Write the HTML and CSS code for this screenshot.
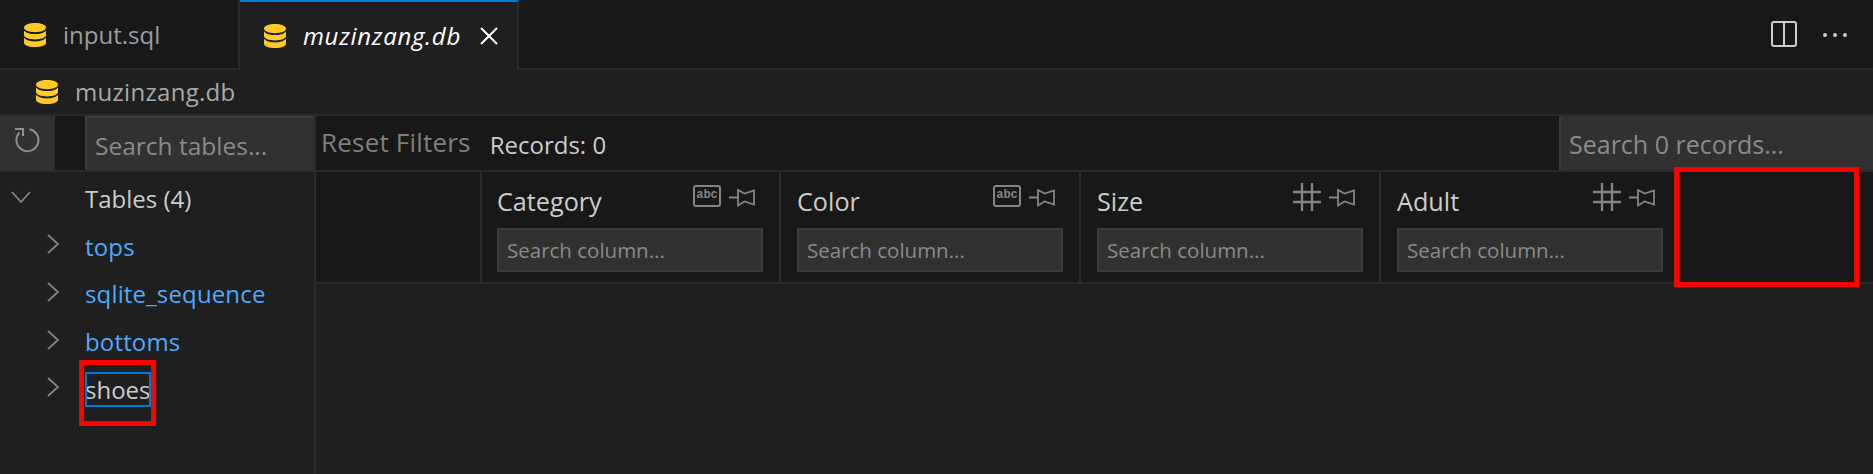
FILE: index.html
```html
<!DOCTYPE html>
<html lang="en">
<head>
<meta charset="utf-8">
<title>muzinzang.db</title>
<link rel="stylesheet" href="styles.css">
</head>
<body>
<svg class="defs" aria-hidden="true">
  <defs>
    <symbol id="db" viewBox="0 0 22 24">
      <path fill="#ffca28" d="M11 0C5 0 0 1.800 0 4.600S5 9.200 11 9.200 22 7.400 22 4.600 17 0 11 0Z"/>
      <path fill="#ffca28" d="M0 7.400V12c0 2.600 5 4.400 11 4.400S22 14.600 22 12V7.400c-1.800 2.500-6.200 3.600-11 3.600S1.800 9.900 0 7.400Z"/>
      <path fill="#ffca28" d="M0 14.800V19.400C0 22.200 5 24 11 24s11-1.800 11-4.600v-4.600c-1.800 2.500-6.200 3.600-11 3.600S1.800 17.300 0 14.800Z"/>
    </symbol>
    <symbol id="pin" viewBox="0 0 26 18">
      <path fill="none" stroke="currentColor" stroke-width="1.800" d="M0 8.500h9M9 1v15.500l6.500-4 9.500 3V1.500l-9.500 3L9 1Z"/>
    </symbol>
    <symbol id="hash" viewBox="0 0 28 28">
      <path fill="none" stroke="currentColor" stroke-width="2.400" d="M9 0v28M19 0v28M0 9h28M0 19h28"/>
    </symbol>
    <symbol id="abc" viewBox="0 0 28 22">
      <rect x="1" y="1" width="26" height="20" rx="2" fill="none" stroke="currentColor" stroke-width="2"/>
    </symbol>
    <symbol id="chev-r" viewBox="0 0 12 20">
      <path fill="none" stroke="currentColor" stroke-width="1.800" d="M1 1l10 9-10 9"/>
    </symbol>
  </defs>
</svg>

<div class="tabs">
  <div class="tab">
    <svg class="db-icon"><use href="#db"/></svg>
    <span class="tab-name">input.sql</span>
  </div>
  <div class="tab tab-active">
    <svg class="db-icon"><use href="#db"/></svg>
    <span class="tab-name">muzinzang.db</span>
    <svg class="tab-close" viewBox="0 0 18 18"><path fill="none" stroke="#fff" stroke-width="2" d="M1 1l16 16M17 1L1 17"/></svg>
  </div>
  <div class="tab-actions">
    <svg class="split-icon" viewBox="0 0 26 26"><rect x="1" y="1" width="24" height="24" rx="2" fill="none" stroke="#cccccc" stroke-width="2"/><path stroke="#cccccc" stroke-width="2" d="M13 1v24"/></svg>
    <svg class="more-icon" viewBox="0 0 24 4"><circle cx="2" cy="2" r="2" fill="#cccccc"/><circle cx="12" cy="2" r="2" fill="#cccccc"/><circle cx="22" cy="2" r="2" fill="#cccccc"/></svg>
  </div>
</div>

<div class="crumbs">
  <svg class="db-icon"><use href="#db"/></svg>
  <span class="crumb-name">muzinzang.db</span>
</div>

<div class="main">
  <aside class="side">
    <div class="side-tools">
      <div class="refresh">
        <svg class="refresh-icon" viewBox="0 0 24 24"><path fill="none" stroke="#8f8f8f" stroke-width="2" d="M4.500 4.500A11 11 0 1 0 14.500 1.300M0 1h8v7"/></svg>
      </div>
      <div class="side-gap"></div>
      <input class="search search-tables" placeholder="Search tables...">
    </div>
    <div class="tree">
      <div class="tree-row tree-head">
        <svg class="chev-down" viewBox="0 0 20 12"><path fill="none" stroke="#858585" stroke-width="1.800" d="M1 1l9 10 9-10"/></svg>
        <span>Tables (4)</span>
      </div>
      <div class="tree-row"><svg class="chev"><use href="#chev-r"/></svg><span class="link">tops</span></div>
      <div class="tree-row"><svg class="chev"><use href="#chev-r"/></svg><span class="link">sqlite_sequence</span></div>
      <div class="tree-row"><svg class="chev"><use href="#chev-r"/></svg><span class="link">bottoms</span></div>
      <div class="tree-row"><svg class="chev"><use href="#chev-r"/></svg><span class="focused">shoes</span></div>
    </div>
  </aside>
  <section class="grid">
    <div class="grid-tools">
      <span class="reset">Reset Filters</span>
      <span class="records">Records: 0</span>
      <input class="search search-records" placeholder="Search 0 records...">
    </div>
    <div class="head">
      <div class="head-index"></div>
      <div class="col col-first">
        <div class="col-top"><span class="col-name">Category</span><span class="col-icons"><span class="abc"><svg class="abc-box"><use href="#abc"/></svg><span class="abc-text">abc</span></span><svg class="pin"><use href="#pin"/></svg></span></div>
        <input class="col-search" placeholder="Search column...">
      </div>
      <div class="col">
        <div class="col-top"><span class="col-name">Color</span><span class="col-icons"><span class="abc"><svg class="abc-box"><use href="#abc"/></svg><span class="abc-text">abc</span></span><svg class="pin"><use href="#pin"/></svg></span></div>
        <input class="col-search" placeholder="Search column...">
      </div>
      <div class="col">
        <div class="col-top"><span class="col-name">Size</span><span class="col-icons"><svg class="hash"><use href="#hash"/></svg><svg class="pin"><use href="#pin"/></svg></span></div>
        <input class="col-search" placeholder="Search column...">
      </div>
      <div class="col col-last">
        <div class="col-top"><span class="col-name">Adult</span><span class="col-icons"><svg class="hash"><use href="#hash"/></svg><svg class="pin"><use href="#pin"/></svg></span></div>
        <input class="col-search" placeholder="Search column...">
      </div>
    </div>
  </section>
</div>

<div class="mark mark-shoes"></div>
<div class="mark mark-column"></div>
</body>
</html>
```
FILE: styles.css
```css
* { box-sizing: border-box; }
html, body { margin: 0; height: 100%; }
body {
  background: #1f1f1f;
  color: #cccccc;
  font-family: "Open Sans", "Noto Sans", sans-serif;
  font-size: 24px;
  overflow: hidden;
  position: relative;
}
.defs { position: absolute; width: 0; height: 0; }
.tabs {
  display: flex;
  height: 70px;
  background: #181818;
  border-bottom: 2px solid #2b2b2b;
}
.tab {
  display: flex;
  align-items: center;
  width: 240px;
  padding: 0 0 0 24px;
  border-right: 2px solid #2b2b2b;
  margin-bottom: -2px;
  color: #9d9d9d;
}
.tab-active {
  width: 279px;
  background: #1f1f1f;
  border-top: 2px solid #0078d4;
  color: #ffffff;
  font-style: italic;
  padding-left: 24px;
  letter-spacing: 0.7px;
}
.db-icon { width: 22px; height: 24px; flex: none; }
.tab-name { margin-left: 17px; margin-top: -2px; }
.tab-close { width: 18px; height: 18px; margin-left: 19px; }
.tab-actions {
  margin-left: auto;
  display: flex;
  align-items: center;
  gap: 26px;
  padding-right: 26px;
}
.split-icon { width: 26px; height: 26px; }
.more-icon { width: 24px; height: 4px; margin-top: 2px; }
.crumbs {
  display: flex;
  align-items: center;
  height: 46px;
  padding-left: 36px;
  border-bottom: 2px solid #2b2b2b;
  color: #a9a9a9;
  letter-spacing: 0.3px;
}
.crumb-name { margin-left: 17px; margin-top: -2px; }
.main { display: flex; height: 358px; }
.side {
  width: 316px;
  flex: none;
  border-right: 2px solid #2b2b2b;
}
.side-tools { display: flex; height: 56px; border-bottom: 2px solid #2b2b2b; }
.refresh {
  width: 55px;
  background: #313131;
  display: flex;
  justify-content: center;
  padding: 12px 1px 0 0;
}
.refresh-icon { width: 24px; height: 24px; overflow: visible; }
.side-gap { width: 30px; background: #181818; }
.search {
  font: inherit;
  background: #313131;
  border: 2px solid #3c3c3c;
  color: #cccccc;
  outline: none;
  border-radius: 0;
}
.search::placeholder, .col-search::placeholder { color: #8a8a8a; opacity: 1; }
.search-tables { width: 229px; font-size: 24.500px; padding: 2px 0 0 8px; border-bottom: 0; border-right: 0; }
.tree { padding-top: 4px; }
.tree-row {
  display: flex;
  align-items: center;
  height: 47.600px;
  padding-left: 47px;
}
.tree-row > span { margin-left: 26px; margin-top: -2px; }
.tree-head { padding-left: 10px; }
.tree-row.tree-head > span { margin-left: 54px; }
.chev-down { width: 20px; height: 12px; margin-top: -6px; margin-left: 1px; }
.chev { width: 12px; height: 20px; color: #858585; margin-top: -6px; }
.link { color: #4daafc; letter-spacing: 0.15px; }
.focused { outline: 2px solid #0078d4; outline-offset: -2px; line-height: 35px; height: 35px; width: 66px; white-space: nowrap; }
.grid { flex: 1; display: flex; flex-direction: column; min-width: 0; }
.grid-tools {
  display: flex;
  align-items: center;
  height: 56px;
  background: #181818;
  border-bottom: 2px solid #2b2b2b;
}
.reset { font-size: 26px; letter-spacing: 0.2px; color: #7f7f7f; margin-left: 5px; margin-top: -3px; }
.records { margin-left: 19px; margin-top: 3px; }
.search-records {
  font-size: 25px;
  margin-left: auto;
  width: 314px;
  height: 54px;
  padding: 2px 0 0 8px;
  border-top: 0;
  border-right: 0;
  border-bottom: 0;
}
.head {
  display: flex;
  height: 112px;
  background: #181818;
  border-bottom: 2px solid #2b2b2b;
}
.head-index { width: 166px; border-right: 2px solid #2b2b2b; }
.col {
  width: 300px;
  padding: 12px 16px 0;
  border-right: 2px solid #2b2b2b;
}
.col-first { width: 299px; padding-left: 15px; }
.col-last { border-right: 0; }
.col-top { display: flex; justify-content: space-between; width: 266px; height: 44px; }
.col-name { font-size: 25.200px; color: #cccccc; white-space: nowrap; }
.col-icons { display: flex; align-items: flex-start; gap: 8px; color: #848484; margin-right: 8px; }
.abc { position: relative; width: 28px; height: 22px; display: block; margin-top: 1px; }
.abc-box { width: 28px; height: 22px; display: block; }
.abc-text {
  position: absolute;
  inset: 0;
  text-align: center;
  font-size: 12px;
  line-height: 21px;
  font-weight: 600;
  font-family: "Liberation Mono", monospace;
}
.pin { width: 26px; height: 18px; margin-top: 5px; }
.hash { width: 28px; height: 28px; margin-top: -1px; }
.col-search {
  display: block;
  width: 266px;
  height: 44px;
  background: #313131;
  border: 2px solid #3c3c3c;
  border-radius: 0;
  outline: none;
  padding: 0 8px;
  font: inherit;
  font-size: 20.500px;
  color: #cccccc;
}
.mark { position: absolute; border: 5px solid #ff0000; pointer-events: none; }
.mark-shoes { left: 79px; top: 360px; width: 77px; height: 66px; }
.mark-column { left: 1674px; top: 167px; width: 185px; height: 120px; }
```
